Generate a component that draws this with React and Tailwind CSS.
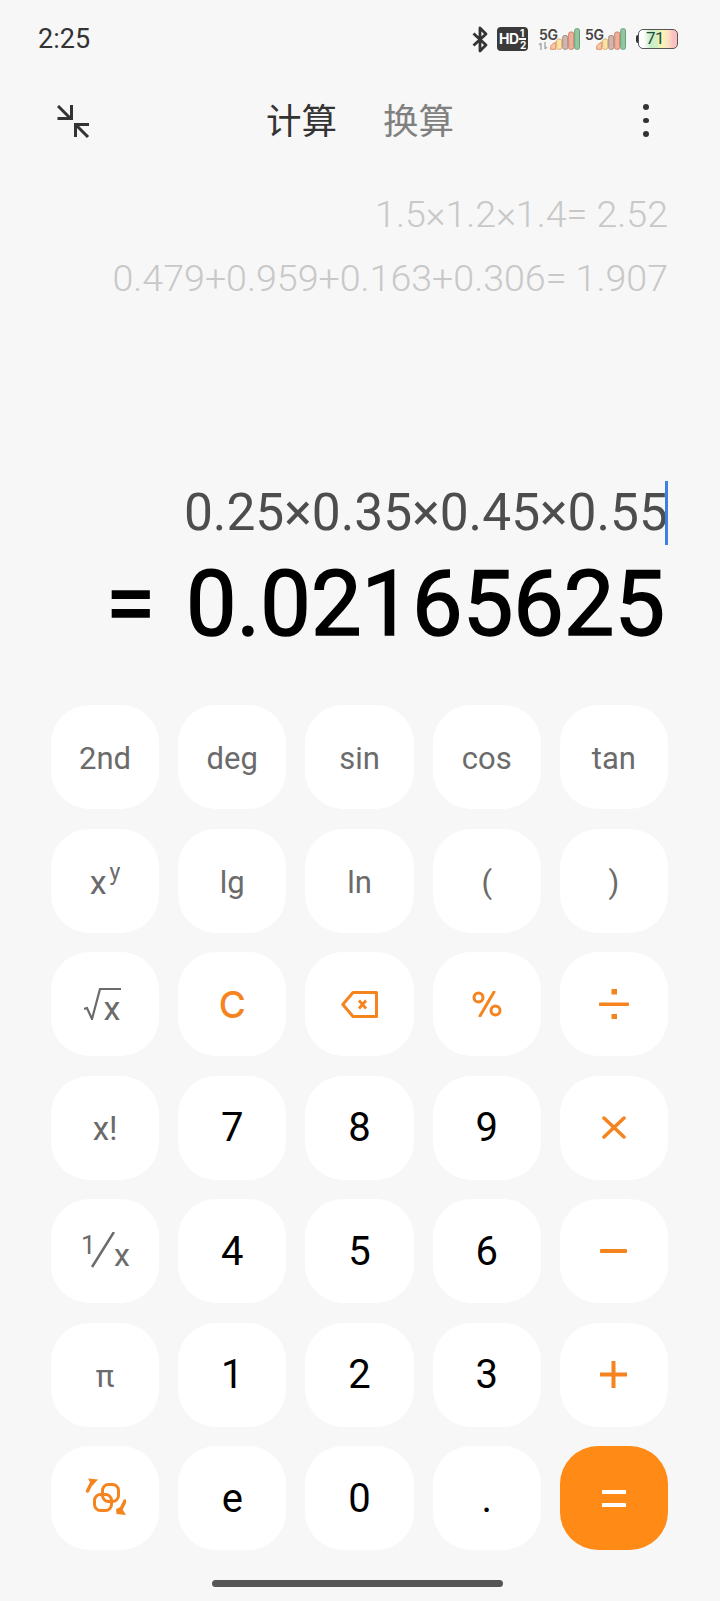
import React from "react";

const F = "font-['Roboto','Noto_Sans_CJK_SC',sans-serif]";

function Bluetooth() {
  return (
    <svg width="16" height="27" viewBox="0 0 16 27" fill="none" stroke="#333" strokeWidth="2.8" strokeLinejoin="round">
      <path d="M1.5 7.5 14 19 8 25V2l6 6L1.5 19.5" />
    </svg>
  );
}

function HD() {
  return (
    <div className="relative w-[31px] h-[24px] rounded-[4px] bg-[#3a3a3a] text-white font-['Inter',sans-serif] font-bold leading-none">
      <span className="absolute left-[2px] top-[5px] text-[14px] tracking-[-0.5px]">HD</span>
      <span className="absolute left-[23px] top-[1px] text-[10px]">1</span>
      <span className="absolute left-[22px] top-[11px] w-[7px] h-[1.5px] bg-white" />
      <span className="absolute left-[23px] top-[13px] text-[10px]">2</span>
    </div>
  );
}

function Signal({ arrows }) {
  return (
    <div className="relative w-[40px] h-[24px]">
      <span className="absolute left-0 top-[1px] text-[14px] leading-none font-semibold text-[#444] font-['Inter',sans-serif] tracking-[-0.3px]">5G</span>
      {arrows && (
        <svg className="absolute left-[-1px] top-[15px]" width="10" height="8" viewBox="0 0 10 8" fill="none" stroke="#b0b0b0" strokeWidth="1.6">
          <path d="M3 8V1M1 3l2-2M7 0v7M9 5 7 7" />
        </svg>
      )}
      <svg className="absolute left-[11px] top-[1px]" width="30" height="22" viewBox="0 0 30 22">
        <path d="M.7 21.300V18.500q0-1 1-1.800l4-2.700v7.300z" fill="#f5c8a8" stroke="#e0906a" strokeWidth="1" />
        <rect x="6.700" y="11" width="5" height="10.300" rx="1.800" fill="#fbe3a5" stroke="#dcb070" strokeWidth="1" />
        <rect x="12.700" y="7.500" width="5" height="13.800" rx="1.800" fill="#d2b6ac" stroke="#a88c82" strokeWidth="1" />
        <rect x="18.700" y="4" width="5" height="17.300" rx="1.800" fill="#eeb09a" stroke="#cc8068" strokeWidth="1" />
        <rect x="24.700" y=".7" width="4.800" height="20.600" rx="1.800" fill="#94c6a0" stroke="#66a078" strokeWidth="1" />
      </svg>
    </div>
  );
}

function Battery() {
  return (
    <div className="flex items-center w-[42px] h-[20px]">
      <span className="w-[2px] h-[8px] rounded-l-[2px] bg-[#333] shrink-0" />
      <div className="relative w-[40px] h-[20px] rounded-[5px] border-[1.5px] border-[#555] overflow-hidden bg-[linear-gradient(90deg,#fff_0%,#fff_12%,#c9ecc9_30%,#d9f0c0_50%,#fdf3b5_62%,#fde0c4_78%,#fbc0c0_90%,#fbc0c0_100%)]">
        <span className="absolute left-[7px] top-[0px] text-[17px] leading-[17px] font-normal text-[#1d4d3a] font-['Roboto',sans-serif] tracking-[-0.5px]">71</span>
      </div>
    </div>
  );
}

function StatusBar() {
  return (
    <div className="flex items-center justify-between h-[78px] pl-[38px] pr-[42px]">
      <span className={`${F} text-[27px] text-[#333] font-normal`}>2:25</span>
      <div className="flex items-center">
        <Bluetooth />
        <div className="ml-[9px]"><HD /></div>
        <div className="flex items-center gap-[6px] ml-[11px]">
          <Signal arrows />
          <Signal />
        </div>
        <div className="ml-[11px]"><Battery /></div>
      </div>
    </div>
  );
}

function Header() {
  return (
    <div className="relative flex items-center justify-center h-[84px] gap-[46px] pb-[3px]">
      <svg className="absolute left-[57px] top-[27px]" width="33" height="33" viewBox="0 0 33 33" fill="none" stroke="#333" strokeWidth="3">
        <path d="M.5 13.500h14V0M1 1l13 13" />
        <path d="M32 19.500H18.500V32M18.500 19.500 31 32" />
      </svg>
      <span className="text-[35.500px] leading-none text-[#333] font-['Noto_Sans_CJK_SC',sans-serif]">计算</span>
      <span className="text-[35.500px] leading-none text-[#808080] font-['Noto_Sans_CJK_SC',sans-serif]">换算</span>
      <div className="absolute left-[643px] top-[26px] flex flex-col gap-[8px]">
        <span className="w-[5.500px] h-[5.500px] rounded-full bg-[#333]" />
        <span className="w-[5.500px] h-[5.500px] rounded-full bg-[#333]" />
        <span className="w-[5.500px] h-[5.500px] rounded-full bg-[#333]" />
      </div>
    </div>
  );
}

function Display() {
  return (
    <div className={`flex flex-col items-end h-[543px] pr-[52px] ${F}`}>
      <div className="mt-[20px] text-[37.600px] leading-[64px] text-[#c8c8c8] font-light text-right">
        <div>1.5×1.2×1.4= 2.52</div>
        <div>0.479+0.959+0.163+0.306= 1.907</div>
      </div>
      <div className="mt-[171px] relative text-[51.500px] leading-[64px] text-[#4d4d4d]">
        0.25×0.35×0.45×0.55
        <span className="absolute right-0 top-0 w-[3px] h-[64px] bg-[#3f7fe0]" />
      </div>
      <div className="mt-[8px] mr-[3px] text-[90px] leading-[104px] font-normal [-webkit-text-stroke:1.5px_black] text-black flex items-center">
        <span className="mr-[31px]">=</span>
        <span>0.02165625</span>
      </div>
    </div>
  );
}

function Sqrt() {
  return (
    <span className="relative block w-[37px] h-[32px] mr-[6px]">
      <svg className="absolute left-0 top-0" width="37" height="32" viewBox="0 0 37 32" fill="none" stroke="#6b6b6b" strokeWidth="2.200">
        <path d="M0 21l3-1 5 11 8-30h21" />
      </svg>
      <span className="absolute left-[20px] top-[3px] text-[34px] leading-none text-[#6b6b6b]">x</span>
    </span>
  );
}

function Fraction() {
  return (
    <span className="relative block w-[48px] h-[38px] text-[#6b6b6b]">
      <span className="absolute left-0 top-0 text-[26px] leading-none">1</span>
      <svg className="absolute left-[10px] top-0" width="24" height="38" viewBox="0 0 24 38" stroke="#6b6b6b" strokeWidth="2.600">
        <path d="M23 0 1 35" />
      </svg>
      <span className="absolute left-[33px] top-[7px] text-[32px] leading-none">x</span>
    </span>
  );
}

function Backspace() {
  return (
    <svg width="37" height="27" viewBox="0 0 37 27" fill="none" stroke="#f5841f" strokeWidth="3" strokeLinejoin="round">
      <path d="M12 1.500h23.500V25.500H12L1.800 13.500z" />
      <path d="M18 9.500l7 8M25 9.500l-7 8" strokeWidth="2.800" />
    </svg>
  );
}

function Percent() {
  return (
    <svg width="30" height="26" viewBox="0 0 30 26" fill="none" stroke="#f5841f" strokeWidth="3">
      <circle cx="6.500" cy="6.500" r="4.500" />
      <circle cx="23.500" cy="19.500" r="4.500" />
      <path d="M22 1 8 25" strokeLinecap="round" />
    </svg>
  );
}

function Divide() {
  return (
    <svg width="30" height="30" viewBox="0 0 30 30" fill="#f5841f">
      <rect x="0" y="13.500" width="30" height="3.500" rx=".8" />
      <rect x="12.500" y="0" width="5.500" height="5.500" />
      <rect x="12.500" y="25" width="5.500" height="5.500" />
    </svg>
  );
}

function Times() {
  return (
    <svg width="24" height="23" viewBox="0 0 24 23" stroke="#f5841f" strokeWidth="3.500" strokeLinecap="round">
      <path d="M2 2l20 19M22 2 2 21" />
    </svg>
  );
}

function Minus() {
  return <span className="block w-[27px] h-[4px] bg-[#f5841f] rounded-[1px]" />;
}

function Plus() {
  return (
    <svg width="27" height="27" viewBox="0 0 27 27" stroke="#f5841f" strokeWidth="4">
      <path d="M0 13.500h27M13.500 0v27" />
    </svg>
  );
}

function Swap() {
  return (
    <svg width="42" height="40" viewBox="0 0 42 40" fill="none" stroke="#f5841f" strokeWidth="3">
      <rect x="10.500" y="16.500" width="17" height="16" rx="6" />
      <rect x="18.500" y="6.500" width="16" height="17" rx="6" />
      <path d="M3.500 13 8 4" strokeWidth="3.500" strokeLinecap="round" />
      <path d="M4 .5 14 1.500 8 8z" fill="#f5841f" stroke="none" />
      <path d="M41 23 36.500 32" strokeWidth="3.500" strokeLinecap="round" />
      <path d="M32 31 37 29 42 37 32.500 36z" fill="#f5841f" stroke="none" />
    </svg>
  );
}

const gray = "text-[#6b6b6b] text-[31px] pt-[3px]";
const num = "text-black text-[40px] pt-[1px]";

const keys = [
  { c: "2nd", k: gray }, { c: "deg", k: gray }, { c: "sin", k: gray }, { c: "cos", k: gray }, { c: "tan", k: gray },
  { c: <span className="relative">x<sup className="absolute left-[100%] top-[-4px] text-[23px] leading-none ml-[3px]">y</sup></span>, k: "text-[#6b6b6b] text-[34px] pr-[14px] pt-[2px]" },
  { c: "lg", k: gray }, { c: "ln", k: gray }, { c: "(", k: gray }, { c: ")", k: gray },
  { c: <Sqrt /> }, { c: "C", k: "text-[#f5841f] text-[37px] font-medium font-['Inter',sans-serif]" }, { c: <Backspace /> }, { c: <Percent /> }, { c: <Divide /> },
  { c: "x!", k: "text-[#6b6b6b] text-[33px] pt-[2px]" }, { c: "7", k: num }, { c: "8", k: num }, { c: "9", k: num }, { c: <Times /> },
  { c: <Fraction /> }, { c: "4", k: num }, { c: "5", k: num }, { c: "6", k: num }, { c: <Minus /> },
  { c: "π", k: gray }, { c: "1", k: num }, { c: "2", k: num }, { c: "3", k: num }, { c: <Plus /> },
  { c: <Swap /> }, { c: "e", k: num }, { c: "0", k: num }, { c: ".", k: num },
];

function Keypad() {
  return (
    <div className={`grid grid-cols-5 gap-x-[19px] gap-y-[19.5px] pl-[51px] pr-[52px] ${F}`}>
      {keys.map((key, i) => (
        <button key={i} className={`flex items-center justify-center h-[104px] rounded-[38px] bg-white leading-none ${key.k || ""}`}>
          {key.c}
        </button>
      ))}
      <button className="flex items-center justify-center h-[104px] rounded-[38px] bg-[#ff8a15]">
        <svg width="24" height="17" viewBox="0 0 24 17" fill="#fff">
          <rect width="24" height="4" rx=".5" />
          <rect y="13" width="24" height="4" rx=".5" />
        </svg>
      </button>
    </div>
  );
}

export default function App() {
  return (
    <div className="relative w-[720px] h-[1601px] bg-[#f7f7f7] overflow-hidden">
      <StatusBar />
      <Header />
      <Display />
      <Keypad />
      <div className="absolute left-[212px] top-[1580px] w-[291px] h-[7px] rounded-full bg-[#555]" />
    </div>
  );
}
